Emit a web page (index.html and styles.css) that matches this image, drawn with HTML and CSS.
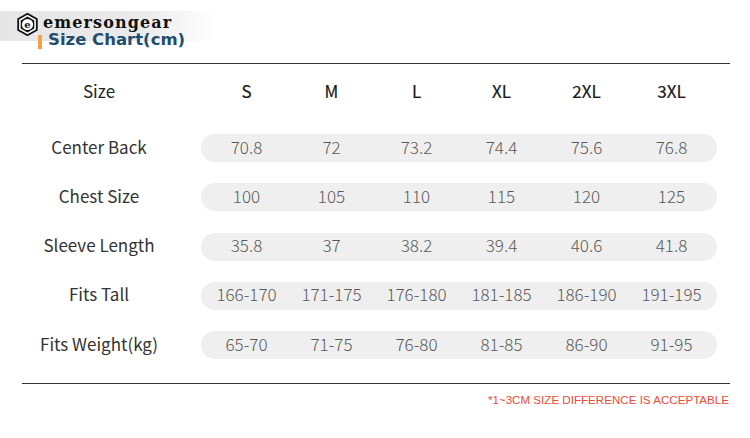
FILE: index.html
```html
<!DOCTYPE html>
<html lang="en">
<head>
<meta charset="utf-8">
<title>Size Chart</title>
<link rel="stylesheet" href="styles.css">
</head>
<body>
<div class="page">
  <header class="brand">
    <div class="logo-row">
      <svg class="logo-mark" width="21" height="23" viewBox="0 0 21 23" aria-hidden="true">
        <polygon points="10.5,0.8 19.8,6 19.8,17 10.5,22.2 1.2,17 1.2,6" fill="#fff" stroke="#111" stroke-width="1.8"/>
        <polygon points="10.5,3.6 17.3,7.4 17.3,15.6 10.5,19.4 3.7,15.6 3.7,7.4" fill="#111"/>
        <circle cx="10.5" cy="11.5" r="5.6" fill="#fff"/>
        <text x="10.5" y="15.2" text-anchor="middle" class="logo-letter">e</text>
      </svg>
      <span class="wordmark">emersongear</span>
    </div>
    <h1 class="title"><span class="title-bar"></span>Size Chart(cm)</h1>
  </header>

  <section class="chart">
    <div class="row head">
      <div class="label">Size</div>
      <div class="cells">
        <span>S</span><span>M</span><span>L</span><span>XL</span><span>2XL</span><span>3XL</span>
      </div>
    </div>
    <div class="row">
      <div class="label">Center Back</div>
      <div class="cells pill">
        <span>70.8</span><span>72</span><span>73.2</span><span>74.4</span><span>75.6</span><span>76.8</span>
      </div>
    </div>
    <div class="row">
      <div class="label">Chest Size</div>
      <div class="cells pill">
        <span>100</span><span>105</span><span>110</span><span>115</span><span>120</span><span>125</span>
      </div>
    </div>
    <div class="row">
      <div class="label">Sleeve Length</div>
      <div class="cells pill">
        <span>35.8</span><span>37</span><span>38.2</span><span>39.4</span><span>40.6</span><span>41.8</span>
      </div>
    </div>
    <div class="row">
      <div class="label">Fits Tall</div>
      <div class="cells pill">
        <span>166-170</span><span>171-175</span><span>176-180</span><span>181-185</span><span>186-190</span><span>191-195</span>
      </div>
    </div>
    <div class="row">
      <div class="label">Fits Weight(kg)</div>
      <div class="cells pill">
        <span>65-70</span><span>71-75</span><span>76-80</span><span>81-85</span><span>86-90</span><span>91-95</span>
      </div>
    </div>
  </section>

  <p class="note">*1~3CM SIZE DIFFERENCE IS ACCEPTABLE</p>
</div>
</body>
</html>
```

FILE: styles.css
```css
html, body {
  margin: 0;
  padding: 0;
  background: #fff;
}

.page {
  width: 750px;
  height: 438px;
  overflow: hidden;
  font-family: "Noto Sans CJK SC", "Noto Sans", sans-serif;
}

.brand {
  padding-top: 13px;
  height: 50px;
  box-sizing: border-box;
  background-image: linear-gradient(to right, #e6e6e6 0, #eaeaea 140px, rgba(255,255,255,0) 215px);
  background-size: 215px 30px;
  background-position: 0 11px;
  background-repeat: no-repeat;
}

.logo-row {
  display: flex;
  align-items: center;
  height: 23px;
  padding-left: 17px;
}

.logo-mark {
  display: block;
}

.logo-letter {
  font-family: "DejaVu Serif", serif;
  font-weight: bold;
  font-size: 10px;
  fill: #111;
}

.wordmark {
  margin-left: 5px;
  font-family: "DejaVu Serif", "Liberation Serif", serif;
  font-weight: bold;
  font-size: 16px;
  letter-spacing: 1.1px;
  color: #111;
  line-height: 1;
  position: relative;
  top: -2px;
}

.title {
  margin: -6px 0 0 38px;
  display: flex;
  align-items: center;
  font-family: "DejaVu Sans", sans-serif;
  font-weight: bold;
  font-size: 16.5px;
  line-height: 20px;
  color: #1e4d6e;
}

.title-bar {
  width: 4px;
  height: 14px;
  background: #f5a04a;
  margin-right: 6px;
  margin-top: 3px;
}

.chart {
  margin: 13px 20px 0 22px;
  border-top: 1px solid #333;
  border-bottom: 1px solid #333;
  padding-bottom: 24px;
}

.row {
  display: grid;
  grid-template-columns: 154px 516px;
  column-gap: 25px;
  align-items: center;
  height: 28px;
  margin-bottom: 21.3px;
}

.row:last-child {
  margin-bottom: 0;
}

.row.head {
  height: 56px;
  margin-bottom: 14px;
}

.label {
  text-align: center;
  font-size: 17px;
  color: #333;
  line-height: 24px;
  margin-bottom: 3px;
}

.cells {
  display: grid;
  grid-template-columns: repeat(6, 85px);
  padding: 0 3px;
  height: 28px;
  align-items: center;
}

.cells span {
  text-align: center;
  font-size: 17px;
  line-height: 24px;
  margin-bottom: 3px;
  font-weight: 300;
  color: #5a5a5a;
}

.head .cells span {
  font-weight: 400;
  color: #1a1a1a;
  -webkit-text-stroke: 0.2px #1a1a1a;
}

.head .label {
  color: #222;
}

.pill {
  background: #efefef;
  border-radius: 14px;
}

.note {
  margin: 9px 21px 0 0;
  text-align: right;
  font-family: "Liberation Sans", Arial, sans-serif;
  font-size: 11.6px;
  color: #f04a37;
  line-height: 14px;
}
```
